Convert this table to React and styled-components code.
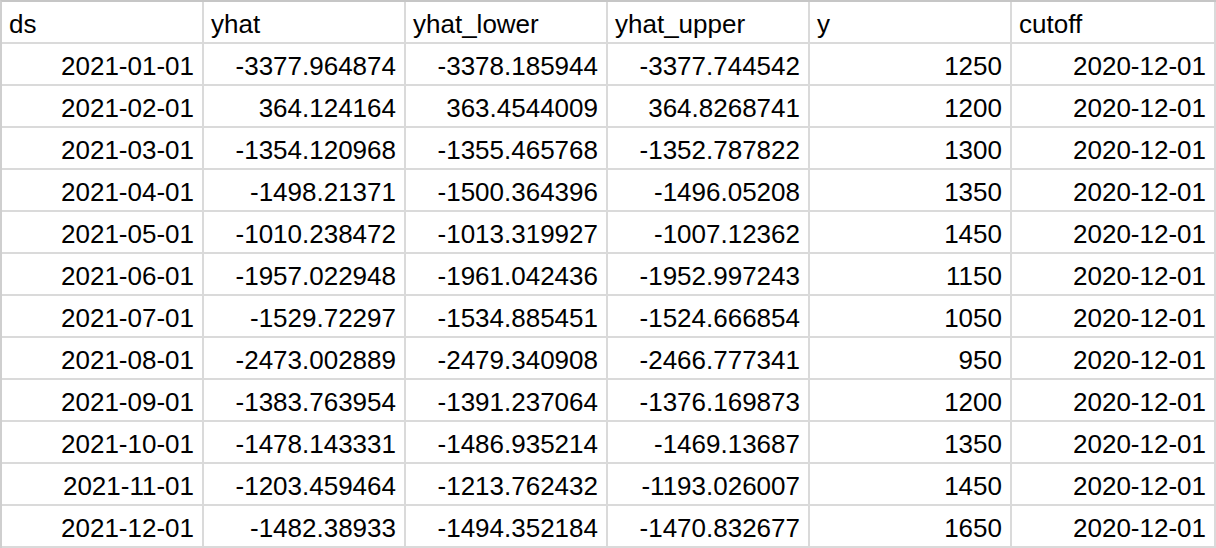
import styled, { createGlobalStyle } from "styled-components";

const columns = ["ds", "yhat", "yhat_lower", "yhat_upper", "y", "cutoff"];

const rows = [
  ["2021-01-01", "-3377.964874", "-3378.185944", "-3377.744542", "1250", "2020-12-01"],
  ["2021-02-01", "364.124164", "363.4544009", "364.8268741", "1200", "2020-12-01"],
  ["2021-03-01", "-1354.120968", "-1355.465768", "-1352.787822", "1300", "2020-12-01"],
  ["2021-04-01", "-1498.21371", "-1500.364396", "-1496.05208", "1350", "2020-12-01"],
  ["2021-05-01", "-1010.238472", "-1013.319927", "-1007.12362", "1450", "2020-12-01"],
  ["2021-06-01", "-1957.022948", "-1961.042436", "-1952.997243", "1150", "2020-12-01"],
  ["2021-07-01", "-1529.72297", "-1534.885451", "-1524.666854", "1050", "2020-12-01"],
  ["2021-08-01", "-2473.002889", "-2479.340908", "-2466.777341", "950", "2020-12-01"],
  ["2021-09-01", "-1383.763954", "-1391.237064", "-1376.169873", "1200", "2020-12-01"],
  ["2021-10-01", "-1478.143331", "-1486.935214", "-1469.13687", "1350", "2020-12-01"],
  ["2021-11-01", "-1203.459464", "-1213.762432", "-1193.026007", "1450", "2020-12-01"],
  ["2021-12-01", "-1482.38933", "-1494.352184", "-1470.832677", "1650", "2020-12-01"],
];

export default function App() {
  return (
    <>
      <GlobalStyle />
      <Sheet>
        {columns.map((c) => (
          <Cell key={c}>{c}</Cell>
        ))}
        {rows.map((r, i) =>
          r.map((v, j) => (
            <Cell key={i + "-" + j} $num>
              {v}
            </Cell>
          ))
        )}
      </Sheet>
    </>
  );
}

const GlobalStyle = createGlobalStyle`
  html, body {
    margin: 0;
    padding: 0;
    background: #ffffff;
  }
  body {
    font-family: "Liberation Sans", Arial, sans-serif;
  }
`;

const Sheet = styled.div`
  display: grid;
  grid-template-columns: repeat(5, 202px) 204px;
  grid-auto-rows: 42px;
  width: 1216px;
  box-sizing: border-box;
  border-top: 2px solid #c6c6c6;
  border-left: 2px solid #cfcfcf;
  background: #fff;
`;

const Cell = styled.div`
  box-sizing: border-box;
  border-right: 2px solid #dadada;
  border-bottom: 2px solid #dadada;
  padding: 4px ${(p) => (p.$num ? "8px" : "7px")} 0 7px;
  line-height: 36px;
  font-size: 26px;
  color: #000;
  text-align: ${(p) => (p.$num ? "right" : "left")};
  white-space: nowrap;
  overflow: hidden;
`;
